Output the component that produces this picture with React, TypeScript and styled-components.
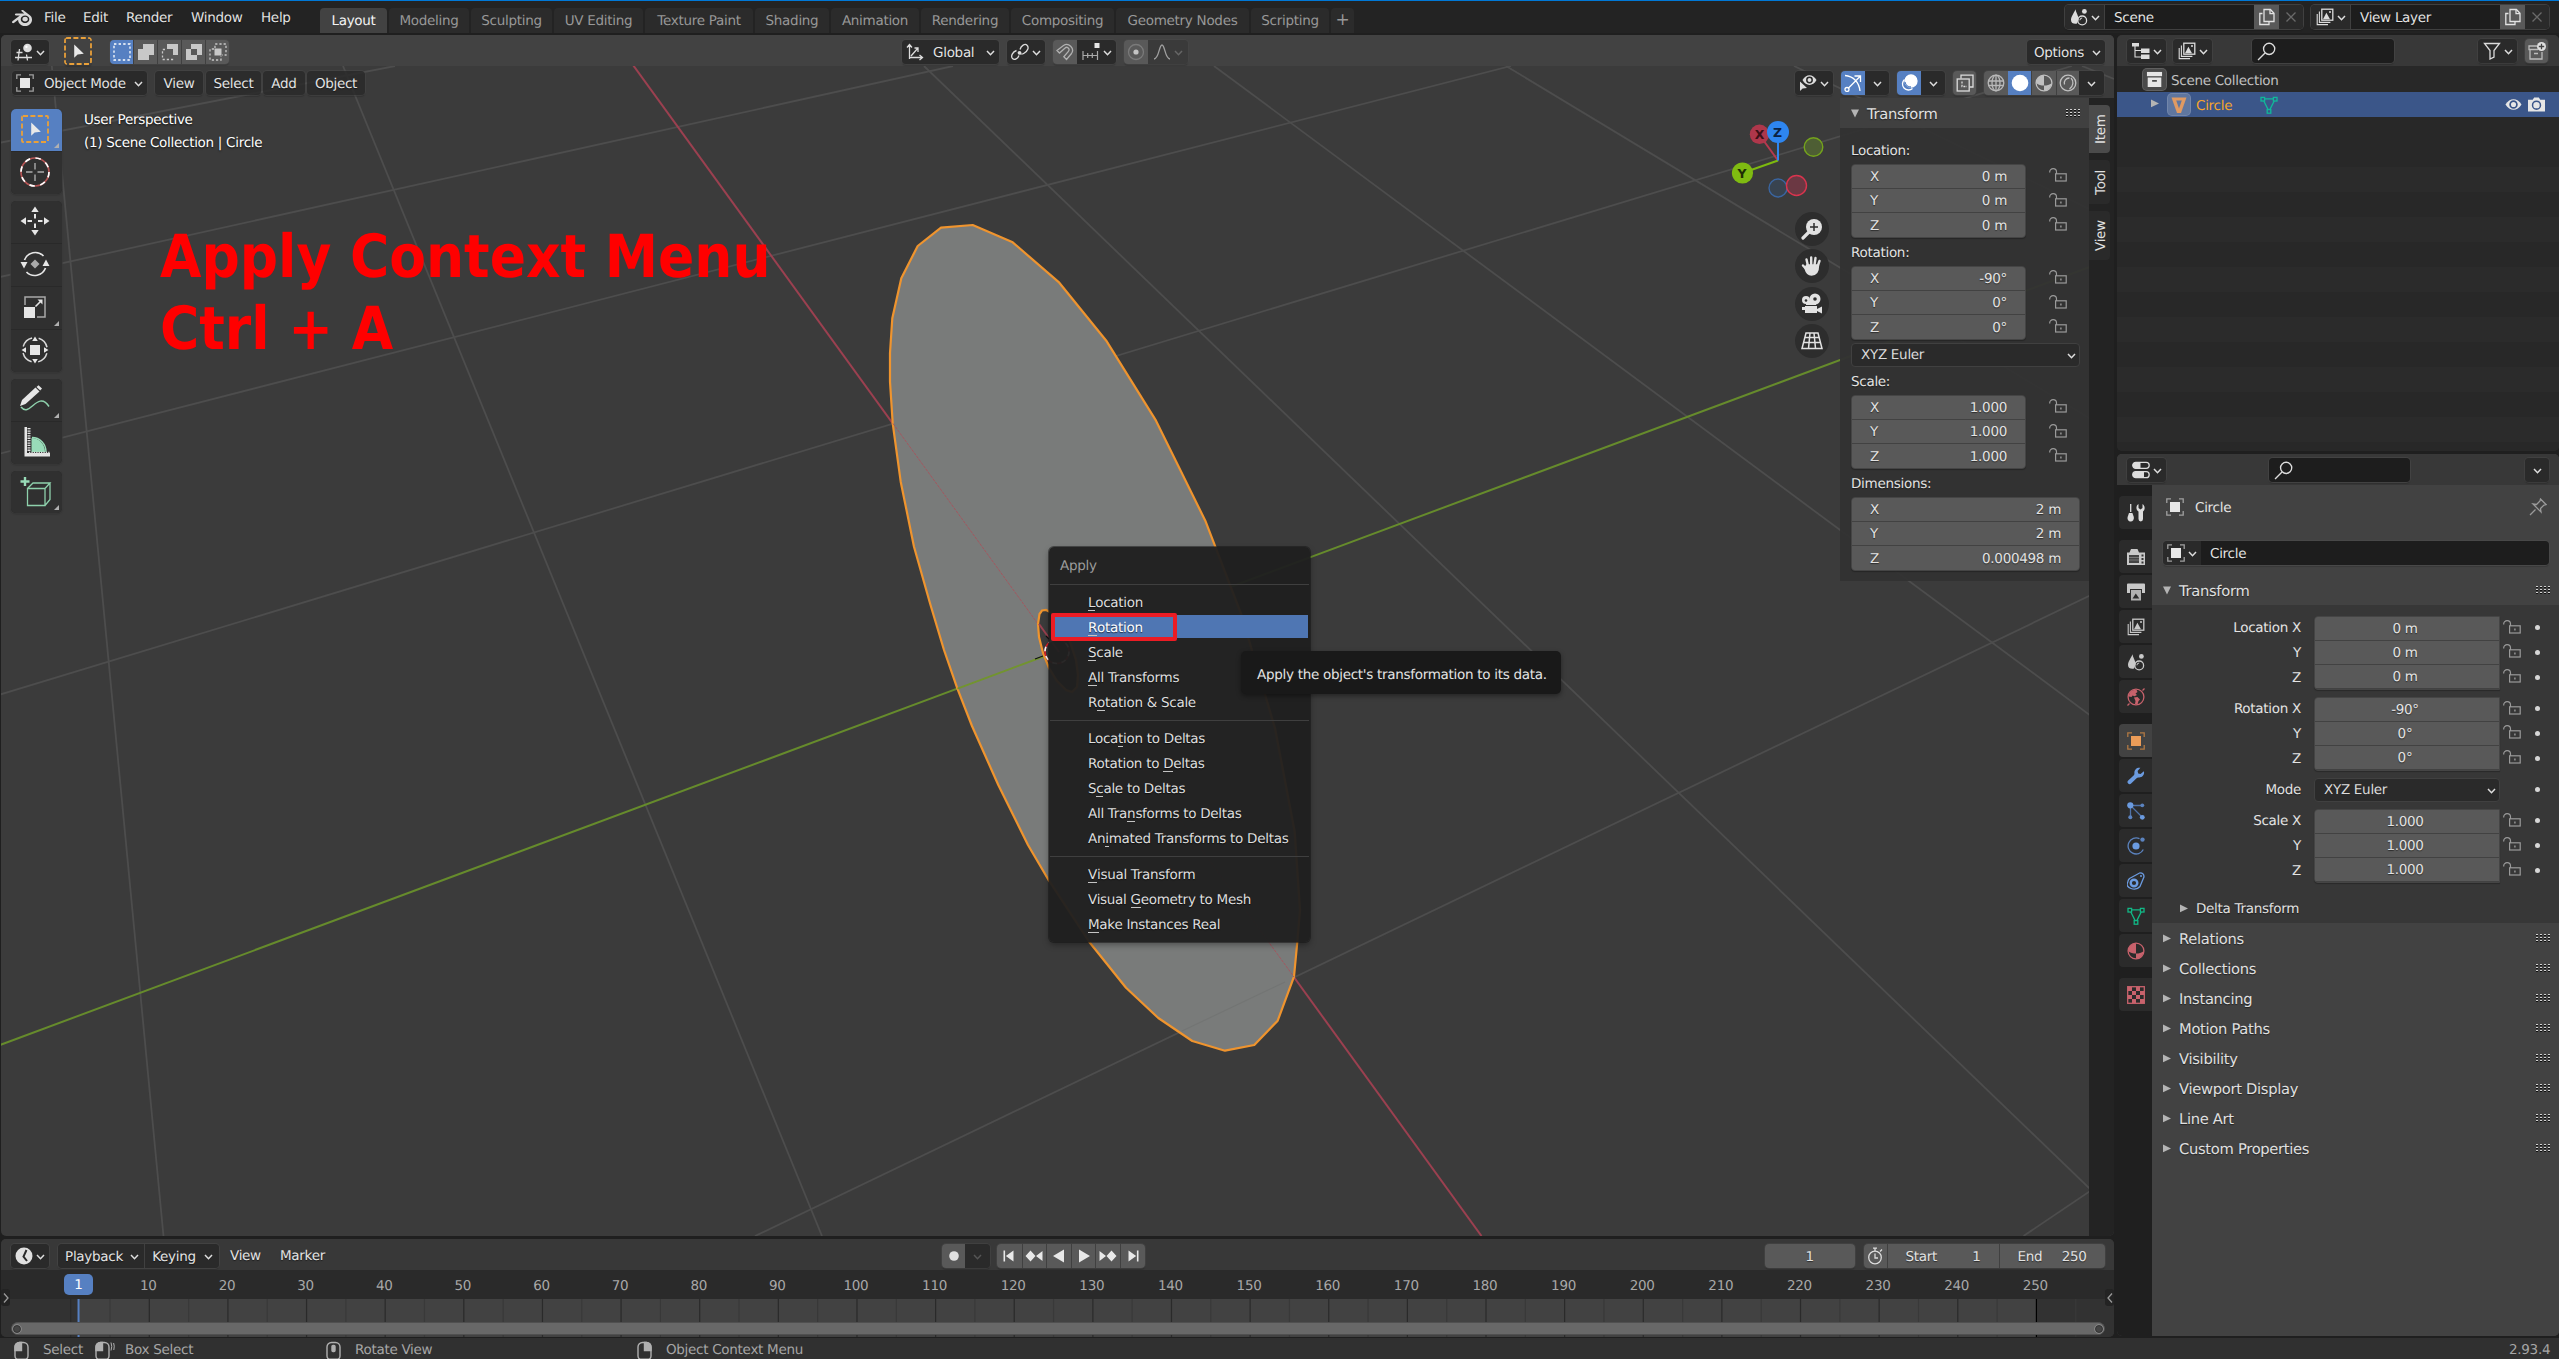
import React from "react";
import styled, { createGlobalStyle, css } from "styled-components";
import { SiBlender } from "react-icons/si";

const Global = createGlobalStyle`
  * { box-sizing: border-box; }
  html, body { margin: 0; padding: 0; background: #1f1f1f; overflow: hidden; }
  body {
    font-family: "DejaVu Sans", sans-serif;
    font-size: 13.5px;
    letter-spacing: -0.29px;
    line-height: 16px;
    color: #e3e3e3;
    text-rendering: geometricPrecision;
  }
  svg { display: block; flex: none; }
`;

/* ---------- shell ---------- */

const Window = styled.div`
  width: 2559px;
  height: 1359px;
  display: flex;
  flex-direction: column;
  background: #1f1f1f;
  overflow: hidden;
  white-space: nowrap;
`;

const TopBar = styled.header`
  height: 33px;
  border-top: 1px solid #0078d7;
  background: #232323;
  display: flex;
  align-items: flex-start;
  padding-left: 12px;
  flex: none;
`;

const Main = styled.main`
  height: 1301px;
  margin: 2px 0 2px 1px;
  display: flex;
  gap: 3px;
  flex: none;
`;

const LeftColumn = styled.div`
  width: 2113px;
  display: flex;
  flex-direction: column;
  gap: 3px;
`;

const RightColumn = styled.div`
  width: 442px;
  display: flex;
  flex-direction: column;
  gap: 3px;
`;

const Area = styled.section<{ h: number; bg: string }>`
  height: ${(p) => p.h}px;
  background: ${(p) => p.bg};
  border-radius: 5px;
  overflow: hidden;
  display: flex;
  flex-direction: column;
  flex: none;
  position: relative;
`;

/* ---------- shared controls ---------- */

const Logo = styled.div`
  width: 32px;
  padding-top: 7px;
  color: #d8d8d8;
`;

const MenuItem = styled.div<{ w: number; ml?: number }>`
  width: ${(p) => p.w}px;
  margin-left: ${(p) => p.ml ?? 0}px;
  padding-top: 9px;
  text-shadow: 0 1px 1px rgba(0, 0, 0, 0.5);
`;

const Tabs = styled.nav`
  display: flex;
  gap: 2px;
  padding: 7px 0 0 0;
`;

const Tab = styled.div<{ w: number; active?: boolean; plus?: boolean }>`
  width: ${(p) => p.w}px;
  height: 25px;
  border-radius: 4px 4px 0 0;
  background: ${(p) => (p.active ? "#424242" : "#2b2b2b")};
  color: ${(p) => (p.active ? "#f4f4f4" : "#989898")};
  text-align: center;
  line-height: 26px;
  ${(p) => p.plus && css`font-size: 17px; line-height: 25px;`}
`;

const Spacer = styled.div`
  flex: 1;
`;

const Header = styled.div<{ bg?: string; h?: number }>`
  height: ${(p) => p.h ?? 31}px;
  background: ${(p) => p.bg ?? "transparent"};
  display: flex;
  align-items: flex-start;
  flex: none;
`;

const Group = styled.div<{ ml?: number; mt?: number; h?: number; edge?: string }>`
  display: flex;
  height: ${(p) => p.h ?? 24}px;
  margin-left: ${(p) => p.ml ?? 0}px;
  margin-top: ${(p) => p.mt ?? 5}px;
  border-radius: 4px;
  overflow: hidden;
  box-shadow: 0 0 0 1px ${(p) => p.edge ?? "rgba(75,75,75,0.45)"}, 0 2px 1px rgba(0, 0, 0, 0.15);
  flex: none;
`;

const tones = {
  dark: "#2a2a2a",
  glass: "rgba(42,42,42,0.85)",
  mid: "#595959",
  blue: "#5680c2",
  field: "#1d1d1d",
  off: "#3a3a3a",
};

const Cell = styled.div<{ w: number; tone?: keyof typeof tones; divider?: boolean; align?: string; pad?: number }>`
  width: ${(p) => p.w}px;
  background: ${(p) => tones[p.tone ?? "dark"]};
  ${(p) => p.divider && css`border-left: 1px solid #404040;`}
  display: flex;
  align-items: center;
  justify-content: ${(p) => p.align ?? "center"};
  padding: 0 ${(p) => p.pad ?? 0}px;
  gap: 3px;
  color: #e3e3e3;
  text-shadow: 0 1px 1px rgba(0, 0, 0, 0.5);
  flex: none;
`;

const Caption = styled.span<{ ml?: number; mr?: number; grow?: boolean }>`
  padding-top: 1px;
  margin-left: ${(p) => p.ml ?? 0}px;
  margin-right: ${(p) => p.mr ?? 0}px;
  ${(p) => p.grow && css`flex: 1;`}
`;

type G = { children?: React.ReactNode; s?: number; c?: string };
const Ic = ({ children, s = 18, c = "#dcdcdc" }: G) => (
  <svg width={s} height={s} viewBox="0 0 18 18" fill="none" stroke={c} strokeWidth="1.3">
    {children}
  </svg>
);

const Chevron = ({ c = "#dedede" }: { c?: string }) => (
  <svg width="9" height="8" viewBox="0 -2 9 8" fill="none" stroke={c} strokeWidth="1.5">
    <path d="M1 1l3.5 3.7L8 1" />
  </svg>
);

const Lock = () => (
  <svg width="18" height="16" viewBox="0 0 18 16" fill="none" stroke="#9a9a9a" strokeWidth="1.2">
    <path d="M.7 4.6V4A3.4 3.3 0 0 1 7.5 4v2" />
    <rect x="6.6" y="5.8" width="10.6" height="7.2" />
    <path d="M11.9 8.4v2.2" strokeWidth="1.4" />
  </svg>
);

const Grip = () => (
  <svg width="15" height="12" viewBox="0 0 15 12">
    {[0, 4, 8, 12].map((x) =>
      [0, 3, 6].map((y) => (
        <g key={`${x}-${y}`}>
          <rect x={x} y={y} width="2" height="1" fill="#d0d0d0" />
          <rect x={x} y={y + 1} width="2" height="1" fill="#101010" />
        </g>
      ))
    )}
  </svg>
);

const Triangle = ({ open }: { open?: boolean }) => (
  <svg width="8" height="11" viewBox="0 0 8 11" fill="#b4b4b4">
    {open ? <path d="M0 .6h8L4 8.4z" /> : <path d="M0 .6v7.6l8-3.8z" />}
  </svg>
);

/* ---------- icons ---------- */

const SceneIcon = ({ c }: { c?: string }) => (
  <Ic c={c}>
    <path d="M5.4 1.2C6 4.5 8.6 8 8.6 11.2L7 15.6c-2.8.8-6-.4-6-3.6C1 8.2 4.2 5 5.4 1.2z" fill={c ?? "#dcdcdc"} stroke="none" />
    <circle cx="12.2" cy="12.4" r="4.4" />
    <path d="M12.2 10a2.3 2.3 0 0 0-2.3 2.3" strokeWidth="1" />
    <circle cx="14.4" cy="3.4" r="2.4" fill={c ?? "#dcdcdc"} stroke="none" />
  </Ic>
);

const LayersIcon = ({ c = "#dcdcdc" }: { c?: string }) => (
  <Ic c={c}>
    <path d="M1.2 6v10.6H12" strokeWidth="1.1" />
    <path d="M3.4 3.6v10.8h11" strokeWidth="1.1" />
    <rect x="5.8" y="1.2" width="11" height="11" />
    <path d="M7 11.2l3.4-6.4 3.6 6.4z" fill={c} stroke="none" />
    <circle cx="14" cy="4" r="1" fill={c} stroke="none" />
  </Ic>
);

const CopyIcon = () => (
  <Ic c="#e2e2e2">
    <path d="M4.5 5.5H1.8v11H11V14" />
    <path d="M6 1.5h6.4l3.6 3.8v8.2H6z" />
    <path d="M12 1.5v4.2h4" />
  </Ic>
);

const CloseIcon = () => (
  <Ic c="#6a6a6a">
    <path d="M4.5 4.5l9 9M13.5 4.5l-9 9" />
  </Ic>
);

const ViewEditorIcon = () => (
  <Ic>
    <path d="M4.5 6L3 17.5M11.5 11.5l1 6M1.5 9.5h6M0 14.5h17" />
    <circle cx="12.5" cy="5" r="4.3" fill="#dcdcdc" stroke="none" />
    <circle cx="11.4" cy="3.8" r="1.2" fill="#fff" stroke="none" />
  </Ic>
);

const ArrowBox = ({ s = 28 }: { s?: number }) => (
  <svg width={s} height={s} viewBox="0 0 28 28">
    <rect x="1" y="1" width="26" height="26" fill="none" stroke="#e9a03a" strokeWidth="1.8" strokeDasharray="5 2.4" rx="1" />
    <path d="M10.2 7.6v13.2l3.4-3.2 6.2-.8z" fill="#e8e8e8" />
  </svg>
);

const ObjectIcon = ({ c = "#e6e6e6", b = "#a0a0a0" }: { c?: string; b?: string }) => (
  <Ic c={b}>
    <path d="M.8 5V.8H5M13 .8h4.2V5M17.2 13v4.2H13M5 17.2H.8V13" />
    <rect x="4" y="4" width="10" height="10" fill={c} stroke="none" />
  </Ic>
);

const SearchIcon = () => (
  <Ic c="#dcdcdc" s={19}>
    <circle cx="11.5" cy="6.5" r="5.3" />
    <path d="M7.6 10.4L1 17" />
  </Ic>
);

const MeshIcon = ({ c = "#12b886" }: { c?: string }) => (
  <Ic c={c}>
    <rect x="1" y="1.4" width="3.6" height="3.6" />
    <rect x="13.4" y="1.4" width="3.6" height="3.6" />
    <rect x="7.2" y="13.6" width="3.6" height="3.6" />
    <path d="M4.6 2.8h8.8M3.8 5l4.2 8.4M14.2 5L10 13.4" />
  </Ic>
);

const MaterialIcon = ({ c = "#c8626c" }: { c?: string }) => (
  <Ic c={c}>
    <circle cx="9" cy="9" r="7.9" />
    <path d="M9 1.2A7.8 7.8 0 0 0 1.2 9c2 2 5 2.6 7.8 2.6zM9 11.6c2.8 0 5.6-.8 7.6-2.4A7.8 7.8 0 0 1 9 16.8z" fill={c} stroke="none" />
  </Ic>
);

const Wrench = ({ c = "#6b9be0" }: { c?: string }) => (
  <Ic c={c}>
    <path
      d="M16.8 4.2L13.6 7l-2.4-.4-.6-2.6L13.4.8C10 0 7 2.6 7.4 6.4c.1.9-.2 1.4-.8 2L1.2 13.6a2 2 0 0 0 2.9 3l5.5-5.4c.6-.6 1.2-.8 2-.7 3.6.4 6.4-2.8 5.2-6.3z"
      fill={c}
      stroke="none"
    />
  </Ic>
);

/* ---------- viewport ---------- */

const ViewBody = styled.div`
  position: relative;
  height: 1170px;
  display: flex;
  flex-direction: column;
`;

const SceneCanvas = styled.svg`
  position: absolute;
  left: 0;
  top: 0;
`;

const Overlay = styled.div`
  position: relative;
  display: flex;
  flex-direction: column;
  height: 100%;
`;

const OverlayRow = styled.div`
  flex: 1;
  display: flex;
  min-height: 0;
`;

const ToolColumn = styled.div`
  width: 51px;
  margin-left: 10px;
  padding-top: 11px;
  display: flex;
  flex-direction: column;
  gap: 7px;
`;

const ToolGroup = styled.div`
  display: flex;
  flex-direction: column;
  gap: 1px;
  border-radius: 5px;
  overflow: hidden;
  background: #292929;
  box-shadow: 0 0 0 1px rgba(60, 60, 60, 0.6), 0 1px 2px rgba(0, 0, 0, 0.3);
`;

const Tool = styled.div<{ active?: boolean; more?: boolean }>`
  height: 42px;
  background: ${(p) => (p.active ? "#5680c2" : "#303030")};
  display: flex;
  align-items: center;
  justify-content: center;
  padding: 0 4px 2px 0;
  position: relative;
  ${(p) =>
    p.more &&
    css`
      &::after {
        content: "";
        position: absolute;
        right: 3px;
        bottom: 3px;
        border-left: 5px solid transparent;
        border-bottom: 5px solid #b0b0b0;
      }
    `}
`;

const ViewInfo = styled.div`
  margin: 10.5px 0 0 22px;
  display: flex;
  flex-direction: column;
  line-height: 23px;
  color: #fff;
  text-shadow: 0 1px 2px rgba(0, 0, 0, 0.8);
`;

const NavColumn = styled.div`
  width: 115px;
  display: flex;
  flex-direction: column;
  align-items: flex-start;
`;

const NavButtons = styled.div`
  margin-left: 70px;
  display: flex;
  flex-direction: column;
  gap: 3.4px;
`;

const NavButton = styled.div`
  width: 34px;
  height: 34px;
  border-radius: 50%;
  background: #2d2d2d;
  display: flex;
  align-items: center;
  justify-content: center;
`;

const SidePanel = styled.aside`
  width: 249px;
  height: 483px;
  background: rgba(50, 50, 50, 0.96);
  display: flex;
  flex-direction: column;
`;

const PanelHead = styled.div<{ h?: number; bg?: string; pl?: number; small?: boolean }>`
  height: ${(p) => p.h ?? 30}px;
  background: ${(p) => p.bg ?? "transparent"};
  display: flex;
  align-items: center;
  gap: 8px;
  padding: 3px 8px 0 ${(p) => p.pl ?? 11}px;
  font-size: ${(p) => (p.small ? 13.5 : 14.7)}px;
  color: #e0e0e0;
  text-shadow: 0 1px 1px rgba(0, 0, 0, 0.5);
  flex: none;
`;

const PanelBody = styled.div`
  padding: 10px 9px 0 11px;
`;

const FieldLabel = styled.div<{ h?: number }>`
  height: ${(p) => p.h ?? 28}px;
  line-height: ${(p) => (p.h ?? 28) + 2}px;
  text-shadow: 0 1px 1px rgba(0, 0, 0, 0.5);
`;

const FieldRow = styled.div<{ mb?: number }>`
  display: flex;
  height: 74px;
  margin-bottom: ${(p) => p.mb ?? 0}px;
`;

const FieldStack = styled.div<{ w: number; flatRight?: boolean }>`
  width: ${(p) => p.w}px;
  display: flex;
  flex-direction: column;
  gap: 1px;
  background: #424242;
  border: 1px solid #454545;
  border-radius: ${(p) => (p.flatRight ? "4px 0 0 4px" : "4px")};
  overflow: hidden;
  box-shadow: 0 1px 1px rgba(0, 0, 0, 0.25);
`;

const Field = styled.div<{ centered?: boolean }>`
  flex: 1;
  background: #595959;
  display: flex;
  align-items: center;
  justify-content: ${(p) => (p.centered ? "center" : "space-between")};
  padding: 1px 18px 0 18px;
  ${(p) => p.centered && css`padding: 1px 4px 0 0;`}
  text-shadow: 0 1px 1px rgba(0, 0, 0, 0.5);
`;

const ThirdColumn = styled.div<{ w: number; ml?: number; align?: string }>`
  width: ${(p) => p.w}px;
  margin-left: ${(p) => p.ml ?? 0}px;
  display: grid;
  grid-template-rows: repeat(3, 1fr);
  align-items: center;
  justify-items: ${(p) => p.align ?? "start"};
`;

const Dropdown = styled.div<{ w: number }>`
  width: ${(p) => p.w}px;
  height: 24px;
  background: #2a2a2a;
  border: 1px solid #404040;
  border-radius: 4px;
  display: flex;
  align-items: center;
  justify-content: space-between;
  padding: 1px 3px 0 9px;
  color: #dcdcdc;
`;

const TabStrip = styled.div`
  width: 25px;
  background: #232323;
  padding-top: 7px;
  display: flex;
  flex-direction: column;
  gap: 7px;
`;

const SideTab = styled.div<{ h: number; active?: boolean }>`
  width: 21px;
  height: ${(p) => p.h}px;
  background: ${(p) => (p.active ? "#4b4b4b" : "#2a2a2a")};
  writing-mode: vertical-rl;
  transform: rotate(180deg);
  border-radius: 4px 0 0 4px;
  display: flex;
  align-items: center;
  justify-content: center;
  padding-right: 2px;
  color: #e0e0e0;
`;

const gridA = [
  [0, 142.7, 395, 66], [0, 277, 953, 66], [0, 453.7, 1511, 66], [0, 694.5, 2072, 66],
  [755, 1236, 2114, 584], [2023.5, 1236, 2114, 1175],
];
const gridB = [
  [51.8, 66, 163.5, 1236], [343, 66, 822, 1236], [924, 66, 2114, 1212],
  [1214, 66, 2114, 733], [1506, 66, 2114, 433], [1794, 66, 2114, 221], [2082, 66, 2114, 79],
];

const disc =
  "972.7,225 1012.7,242.3 1059.3,282.7 1106.7,341.3 1156,420.7 1205.3,520.7 1241.3,614.3 1275,728.3 1294.7,831.7 1300,910 1297.3,942 1294,976.7 1277.7,1020.7 1254.3,1045 1225,1050.7 1192.3,1041 1158.3,1018 1126,987.7 1089.3,942 1049,880.7 1028,845 998.3,785 972,726 957.3,688.3 944,650 930,603.3 914,546.7 900.7,481.7 892.7,423.3 890,381.7 890,353 892.3,318.3 901.3,278.3 917.7,246 941,227.7";
const hole =
  "1042,610.5 1046,610 1052,613 1062,626 1070,642 1076,660 1078,675 1077,687 1072,692 1066,690 1057,681 1049,668 1043,653 1039,637 1038,624 1039.5,614";

const Scene = () => (
  <SceneCanvas width="2113" height="1170" viewBox="1 66 2113 1170" fill="none">
    {[...gridA, ...gridB].map((l, i) => (
      <line key={i} x1={l[0]} y1={l[1]} x2={l[2]} y2={l[3]} stroke="#4d4d4d" strokeWidth="1.8" />
    ))}
    <line x1="633" y1="65" x2="1481.5" y2="1236" stroke="#9b4050" strokeWidth="2" />
    <line x1="0" y1="1045" x2="2114" y2="258" stroke="#668b2c" strokeWidth="2" />
    <polygon points={disc} fill="#797b7a" stroke="#ef942e" strokeWidth="2.2" strokeLinejoin="round" />
    <line x1="1182" y1="1031" x2="1285" y2="982" stroke="#737574" strokeWidth="1.2" />
    <line x1="893" y1="423.5" x2="1038" y2="624" stroke="#a3575f" strokeWidth="1" strokeDasharray="3 1" />
    <line x1="1049" y1="639" x2="1294" y2="977" stroke="#a3575f" strokeWidth="1" strokeDasharray="3 1" />
    <line x1="957.5" y1="688.6" x2="1057" y2="651.5" stroke="#72942f" strokeWidth="2" />
    <polygon points={hole} fill="#3b3b3b" stroke="#ef942e" strokeWidth="2.2" />
    <path d="M1039 624l20 28" stroke="#9b4050" strokeWidth="2" />
    <circle cx="1057" cy="651.5" r="12" stroke="#e0202a" strokeWidth="1.6" />
    <circle cx="1057" cy="651.5" r="12" stroke="#fff" strokeWidth="1.6" strokeDasharray="4.7 4.7" />
    <path d="M1035 659l8-3M1046 636l3 3" stroke="#101010" strokeWidth="1.2" />
  </SceneCanvas>
);

const NavGizmo = () => (
  <svg width="115" height="114" viewBox="1725 98 115 114" fill="none" fontFamily="DejaVu Sans, sans-serif" fontSize="12.5" fontWeight="bold" textAnchor="middle">
    <path d="M1778 160.5L1761 137" stroke="#b6394f" strokeWidth="2" />
    <path d="M1778 160.5L1744 172.5" stroke="#7db90f" strokeWidth="2" />
    <circle cx="1778" cy="188" r="9" fill="#38434f" stroke="#3a65a0" strokeWidth="1.4" />
    <circle cx="1796.5" cy="185.5" r="10" fill="#6b3843" stroke="#d9344e" strokeWidth="1.4" />
    <circle cx="1813.5" cy="147" r="9.3" fill="#4e5e34" stroke="#74a31c" strokeWidth="1.4" />
    <circle cx="1759.5" cy="134.3" r="9.7" fill="#ae374b" />
    <circle cx="1742.5" cy="173" r="10.6" fill="#7fbb11" />
    <path d="M1778 160.5V140" stroke="#2e86ee" strokeWidth="2" />
    <circle cx="1778" cy="132" r="11" fill="#2e86f0" />
    <text x="1759.5" y="139" fill="#3c1018">X</text>
    <text x="1742" y="177.5" fill="#1e2e04">Y</text>
    <text x="1777.5" y="136.5" fill="#0b2243">Z</text>
  </svg>
);

/* ---------- apply menu ---------- */

const Annotation = styled.div`
  position: absolute;
  left: 159px;
  top: 156px;
  font-family: "DejaVu Sans Condensed", "DejaVu Sans", sans-serif;
  font-stretch: condensed;
  font-weight: bold;
  font-size: 59.5px;
  letter-spacing: 0;
  line-height: 72px;
  color: #ff0000;
`;

const PopupMenu = styled.div`
  position: absolute;
  left: 1048px;
  top: 481px;
  width: 261px;
  height: 395px;
  background: rgba(31, 31, 31, 0.955);
  border-radius: 5px;
  box-shadow: 0 0 0 1px rgba(20, 20, 20, 0.5), 0 3px 6px rgba(0, 0, 0, 0.35);
  padding: 7px 2px 0 2px;
`;

const MenuTitle = styled.div`
  height: 24px;
  line-height: 25px;
  padding-left: 9px;
  color: #9c9c9c;
`;

const Separator = styled.div`
  height: 1px;
  margin: 6px -1px 4px;
  background: #3f3f3f;
`;

const MenuEntry = styled.div<{ active?: boolean }>`
  position: relative;
  height: 25px;
  display: flex;
  align-items: center;
  padding: 3px 0 0 37px;
  color: ${(p) => (p.active ? "#fff" : "#dedede")};
  text-shadow: 0 1px 1px rgba(0, 0, 0, 0.6);
  ${(p) =>
    p.active &&
    css`
      background: linear-gradient(#4f76b3, #4f76b3) center / 100% 23px no-repeat;
    `}
`;

const Key = styled.span`
  border-bottom: 1px solid #c4c4c4;
  line-height: 14px;
  display: inline-block;
`;

const Highlight = styled.div`
  position: absolute;
  left: 0;
  top: -1px;
  width: 126px;
  height: 27.5px;
  border: 4px solid #ec1c24;
  border-radius: 2px;
`;

const Tooltip = styled.div`
  position: absolute;
  left: 1240px;
  top: 585px;
  width: 320px;
  height: 43px;
  border-radius: 5px;
  background: #191919;
  box-shadow: 0 2px 5px rgba(0, 0, 0, 0.4);
  display: flex;
  align-items: center;
  padding: 5px 0 0 16px;
`;

const Entry = ({ text, k, active }: { text: string; k: number; active?: boolean }) => (
  <MenuEntry active={active}>
    <span>
      {text.slice(0, k)}
      <Key>{text[k]}</Key>
      {text.slice(k + 1)}
    </span>
    {active && <Highlight />}
  </MenuEntry>
);

/* ---------- timeline ---------- */

const Ruler = styled.div`
  height: 29px;
  background: #2a2a2a;
  display: flex;
  padding: 2px 0 0 108px;
  align-items: center;
  color: #a8a8a8;
  flex: none;
`;

const RulerMark = styled.div`
  width: 78.63px;
  text-align: center;
  flex: none;
`;

const Track = styled.div`
  position: relative;
  height: 38px;
  background: #323232;
`;

const TrackLines = styled.svg`
  position: absolute;
  left: 0;
  top: 0;
`;

const ScrollBar = styled.div`
  position: absolute;
  left: 10px;
  top: 23px;
  width: 2094px;
  height: 13px;
  border-radius: 7px;
  background: #686868;
  border: 1px solid #505050;
  display: flex;
  justify-content: space-between;
  align-items: center;
  padding: 0 1px;
`;

const Knob = styled.div`
  width: 8px;
  height: 8px;
  border-radius: 50%;
  background: #454545;
  border: 1px solid #333;
  outline: 1px solid #858585;
`;

const Playhead = styled.div`
  position: absolute;
  left: 63px;
  top: 35px;
  width: 29px;
  height: 21px;
  border-radius: 5px;
  background: #5680c2;
  color: #fff;
  text-align: center;
  line-height: 22px;
`;

const EdgeHandle = styled.div<{ right?: boolean }>`
  position: absolute;
  top: 50px;
  ${(p) => (p.right ? "right: 0;" : "left: 0;")}
  width: 9px;
  height: 17px;
  background: #232323;
  border-radius: 3px;
  display: flex;
  align-items: center;
  justify-content: center;
`;

const fx = (f: number) => 149.3 + 7.863 * (f - 10) - 1;

/* ---------- outliner ---------- */

const Tree = styled.div`
  flex: 1;
  display: flex;
  flex-direction: column;
  background: repeating-linear-gradient(#2b2b2b 0 25px, #282828 25px 50px);
  background-position: 0 1px;
`;

const TreeRow = styled.div<{ h: number; selected?: boolean; pl: number; pt?: number }>`
  height: ${(p) => p.h}px;
  background: ${(p) => (p.selected ? "#3b5689" : "#282828")};
  display: flex;
  align-items: center;
  padding: ${(p) => p.pt ?? 0}px 14px 0 ${(p) => p.pl}px;
`;

const IconPlate = styled.div<{ bg: string; w?: number; mr?: number; ml?: number }>`
  width: ${(p) => p.w ?? 24}px;
  height: 23px;
  border-radius: 5px;
  background: ${(p) => p.bg};
  border: 1px solid rgba(255, 255, 255, 0.12);
  display: flex;
  align-items: center;
  justify-content: center;
  margin-right: ${(p) => p.mr ?? 5}px;
  margin-left: ${(p) => p.ml ?? 0}px;
`;

const TreeName = styled.span<{ c: string; w?: number }>`
  color: ${(p) => p.c};
  padding-top: 3px;
  ${(p) => p.w && css`width: ${p.w}px;`}
`;

const RowTools = styled.div`
  display: flex;
  gap: 6px;
  margin-left: auto;
`;

/* ---------- properties ---------- */

const PropBody = styled.div`
  flex: 1;
  display: flex;
`;

const PropTabs = styled.div`
  width: 35px;
  background: #1f1f1f;
  padding: 11px 0 0 2px;
  display: flex;
  flex-direction: column;
  gap: 2px;
`;

const PropTab = styled.div<{ active?: boolean; gapTop?: boolean }>`
  height: 33px;
  margin-top: ${(p) => (p.gapTop ? 9 : 0)}px;
  background: ${(p) => (p.active ? "#424242" : "#2b2b2b")};
  border-radius: 4px 0 0 4px;
  display: flex;
  align-items: center;
  justify-content: center;
`;

const PropContent = styled.div`
  width: 407px;
  background: #424242;
  display: flex;
  flex-direction: column;
`;

const Crumb = styled.div`
  height: 44px;
  display: flex;
  align-items: center;
  gap: 11px;
  padding: 0 12px 0 14px;
`;

const IdBlock = styled.div`
  display: flex;
  padding: 12px 0 10px 11px;
`;

const TransformBody = styled.div`
  height: 318px;
  background: #373737;
  padding-top: 10.5px;
  flex: none;
`;

const RowLabel = styled.div`
  width: 149px;
  text-align: right;
  padding-top: 1px;
  text-shadow: 0 1px 1px rgba(0, 0, 0, 0.5);
`;

const ModeRow = styled.div`
  display: flex;
  align-items: center;
  height: 24px;
  margin-bottom: 7px;
  gap: 13px;
`;

const Dot = styled.i<{ ml?: number }>`
  width: 5px;
  height: 5px;
  border-radius: 50%;
  background: #d6d6d6;
  margin-left: ${(p) => p.ml ?? 0}px;
`;

const StatusBar = styled.footer`
  height: 21px;
  background: #303030;
  display: flex;
  align-items: center;
  padding-left: 14px;
  color: #a6a6a6;
  flex: none;
`;

const StatusItem = styled.div<{ w: number; gap?: number }>`
  width: ${(p) => p.w}px;
  display: flex;
  align-items: center;
  gap: ${(p) => p.gap ?? 14}px;
  padding-top: 3px;
`;

const Mouse = ({ b }: { b: "l" | "m" | "r" | "d" }) => (
  <svg width={b === "d" ? 20 : 15} height="19" viewBox={b === "d" ? "0 0 20 19" : "0 0 15 19"} fill="none" stroke="#b0b0b0" strokeWidth="1.4">
    <path d="M1 15V6a4.5 4.5 0 0 1 4.5-4.5h4A4.5 4.5 0 0 1 14 6v9a3.5 3.5 0 0 1-3.5 3.3h-6A3.5 3.5 0 0 1 1 15z" />
    {(b === "l" || b === "d") && <path d="M1 9.5V6a4.5 4.5 0 0 1 4.5-4.5h2v8z" fill="#b0b0b0" />}
    {b === "r" && <path d="M14 9.5V6a4.5 4.5 0 0 0-4.5-4.5h-2v8z" fill="#b0b0b0" />}
    {b === "m" && <rect x="6" y="4.5" width="3" height="6" rx="1" fill="#b0b0b0" />}
    {b === "d" && <path d="M16 1.5q1.5 4 0 8M18.6 2q1.2 3 .2 7" strokeWidth="1" />}
  </svg>
);

const AxisBlock = ({ label, values }: { label: string; values: string[] }) => (
  <FieldRow mb={7}>
    <ThirdColumn w={149} align="end">
      <Caption>{label} X</Caption>
      <Caption>Y</Caption>
      <Caption>Z</Caption>
    </ThirdColumn>
    <ThirdColumn w={13} />
    <FieldStack w={186} flatRight>
      {values.map((v, i) => (
        <Field key={i} centered>{v}</Field>
      ))}
    </FieldStack>
    <ThirdColumn w={18} ml={3}><Lock /><Lock /><Lock /></ThirdColumn>
    <ThirdColumn w={5} ml={14}><Dot /><Dot /><Dot /></ThirdColumn>
  </FieldRow>
);

const AxisFields = ({ w, values, lock, mb }: { w: number; values: string[]; lock?: boolean; mb?: number }) => (
  <FieldRow mb={mb}>
    <FieldStack w={w}>
      {["X", "Y", "Z"].map((a, i) => (
        <Field key={a}>
          <span>{a}</span>
          <span>{values[i]}</span>
        </Field>
      ))}
    </FieldStack>
    {lock && <ThirdColumn w={18} ml={23}><Lock /><Lock /><Lock /></ThirdColumn>}
  </FieldRow>
);

const tabs: [string, number][] = [
  ["Layout", 67], ["Modeling", 80], ["Sculpting", 81], ["UV Editing", 89], ["Texture Paint", 108], ["Shading", 74],
  ["Animation", 88], ["Rendering", 88], ["Compositing", 103], ["Geometry Nodes", 133], ["Scripting", 78], ["+", 23],
];

export default function App() {
  return (
    <Window>
      <Global />
      <TopBar>
        <Logo><SiBlender size={20} /></Logo>
        <MenuItem w={39}>File</MenuItem>
        <MenuItem w={43}>Edit</MenuItem>
        <MenuItem w={65}>Render</MenuItem>
        <MenuItem w={70}>Window</MenuItem>
        <MenuItem w={59}>Help</MenuItem>
        <Tabs>
          {tabs.map(([t, w], i) => (
            <Tab key={t} w={w} active={i === 0} plus={t === "+"}>{t}</Tab>
          ))}
        </Tabs>
        <Group ml={711} mt={4} edge="#404040">
          <Cell w={39}><SceneIcon /><Chevron /></Cell>
          <Cell w={150} tone="field" align="flex-start" pad={9} divider><Caption>Scene</Caption></Cell>
          <Cell w={25} tone="mid"><CopyIcon /></Cell>
          <Cell w={24}><CloseIcon /></Cell>
        </Group>
        <Group ml={8} mt={4} edge="#404040">
          <Cell w={39}><LayersIcon /><Chevron /></Cell>
          <Cell w={150} tone="field" align="flex-start" pad={9} divider><Caption>View Layer</Caption></Cell>
          <Cell w={25} tone="mid"><CopyIcon /></Cell>
          <Cell w={24}><CloseIcon /></Cell>
        </Group>
      </TopBar>

      <Main>
        <LeftColumn>
          <Area h={1201} bg="#3b3b3b">
            <Header bg="#424242">
              <Group ml={10}><Cell w={38}><ViewEditorIcon /><Chevron /></Cell></Group>
              <Group ml={15} mt={2} h={28} edge="transparent"><ArrowBox /></Group>
              <Group ml={18}>
                <Cell w={23} tone="blue">
                  <Ic c="#fff"><rect x="1" y="1" width="16" height="16" strokeDasharray="2.4 2.2" /></Ic>
                </Cell>
                <Cell w={24} tone="mid" divider>
                  <Ic><path d="M6 1h11v11h-5v5H1V6h5z" fill="#c8c8c8" stroke="none" /></Ic>
                </Cell>
                <Cell w={24} tone="mid" divider>
                  <Ic c="#c8c8c8"><path d="M6 1h11v11h-5V6H6z" fill="#c8c8c8" stroke="none" /><path d="M4 6.5H1.5v10h10V14" strokeDasharray="2.2 2" /></Ic>
                </Cell>
                <Cell w={24} tone="mid" divider>
                  <Ic><path d="M6 1h11v11h-5v5H1V6h5zM6 6v6h6V6z" fill="#c8c8c8" fillRule="evenodd" stroke="none" /></Ic>
                </Cell>
                <Cell w={24} tone="mid" divider>
                  <Ic c="#c8c8c8"><path d="M6 5V1h11v11h-4M5 6H1v11h11v-4" strokeDasharray="2.2 2" /><rect x="5.5" y="5.5" width="7" height="7" fill="#c8c8c8" stroke="none" /></Ic>
                </Cell>
              </Group>
              <Group ml={673}>
                <Cell w={97} align="flex-start" pad={4}>
                  <Ic><path d="M3.5 16V2M1 4.5L3.5 1.5 6 4.5M3.5 14.5H16M13.5 12l3 2.5-3 2.5M5 13l7-8M8.5 5H12v4" /></Ic>
                  <Caption ml={6} grow>Global</Caption>
                  <Chevron />
                </Cell>
              </Group>
              <Group ml={8}>
                <Cell w={38}>
                  <Ic><circle cx="8.5" cy="9.8" r="1.9" fill="#dcdcdc" stroke="none" /><path d="M8 12.5c-1 3-4.5 5-6.5 3s0-7 4-8M9 6.5c1-4 5-6.3 7-4.3s1.3 5.3-3 8c-2 1.2-4 .8-4.5 0" /></Ic>
                  <Chevron />
                </Cell>
              </Group>
              <Group ml={8}>
                <Cell w={24} tone="mid">
                  <Ic c="#b0b0b0"><path d="M1 7.5L7.5 2.5c5-3.5 11.5 3 8 8L10.5 16.5l-2.700-2.700 4.600-5.500c2-2.500-1.300-5.200-3.300-3.400L3.500 10z" /></Ic>
                </Cell>
                <Cell w={39}>
                  <Ic><path d="M1 8v9M5.7 10v5M10.3 10v5M15.5 8v9M1 12.5h14.5" strokeWidth="1.2" stroke="#aaa" /><rect x="12.5" y="0" width="5" height="5" fill="#e6e6e6" stroke="none" /></Ic>
                  <Chevron />
                </Cell>
              </Group>
              <Group ml={8}>
                <Cell w={24} tone="mid">
                  <Ic c="#7a7a7a"><circle cx="9" cy="9" r="7.5" /><circle cx="9" cy="9" r="2.6" fill="#c4c4c4" stroke="none" /></Ic>
                </Cell>
                <Cell w={40} tone="off">
                  <Ic c="#a0a0a0"><path d="M1 16c5 0 5-14 8-14s3 14 8 14" /></Ic>
                  <Chevron c="#666" />
                </Cell>
              </Group>
              <Group ml={839}><Cell w={78}><Caption ml={3} mr={5}>Options</Caption><Chevron /></Cell></Group>
            </Header>

            <ViewBody>
              <Scene />
              <Overlay>
                <Header h={32}>
                  <Group ml={11} edge="#404040">
                    <Cell w={135} align="flex-start" pad={4}>
                      <ObjectIcon />
                      <Caption ml={7} grow>Object Mode</Caption>
                      <Chevron />
                    </Cell>
                  </Group>
                  <Group ml={8}><Cell w={48} tone="glass"><Caption>View</Caption></Cell></Group>
                  <Group ml={3}><Cell w={55} tone="glass"><Caption>Select</Caption></Cell></Group>
                  <Group ml={2}><Cell w={42} tone="glass"><Caption>Add</Caption></Cell></Group>
                  <Group ml={2}><Cell w={58} tone="glass"><Caption>Object</Caption></Cell></Group>
                  <Group ml={1430}>
                    <Cell w={38}>
                      <Ic><path d="M1 7.5v9.5l2.6-2.4 4.4-.6z" fill="#dcdcdc" stroke="none" /><path d="M3.5 6C7-.5 14-.5 17.5 6 14 12.500 7 12.500 3.500 6z" fill="#dcdcdc" stroke="none" /><circle cx="10.5" cy="6" r="2.7" stroke="#2a2a2a" strokeWidth="1.5" /></Ic>
                      <Chevron />
                    </Cell>
                  </Group>
                  <Group ml={8}>
                    <Cell w={24} tone="blue"><Ic c="#fff"><path d="M1 1.5c8 .5 14 6.5 15 15.500M3 15.500L16 2.500M10.500 2H16.500V8" /><circle cx="3" cy="15.5" r="2" fill="#5680c2" /></Ic></Cell>
                    <Cell w={24}><Chevron /></Cell>
                  </Group>
                  <Group ml={8}>
                    <Cell w={24} tone="blue"><Ic c="#fff"><circle cx="11" cy="7" r="6" fill="#fff" /><path d="M4.5 5.5a6 6 0 1 0 8 9" /><path d="M5 8a6 6 0 0 0 6 5" stroke="#5680c2" /></Ic></Cell>
                    <Cell w={24}><Chevron /></Cell>
                  </Group>
                  <Group ml={8}>
                    <Cell w={23} tone="mid"><Ic><path d="M5 4.5V1.2h12V13h-3.5" /><rect x="1.2" y="5" width="12" height="12" /><path d="M6 7.5v5h5" strokeDasharray="2 1.2" /></Ic></Cell>
                  </Group>
                  <Group ml={8}>
                    <Cell w={24} tone="mid"><Ic c="#b8b8b8"><circle cx="9" cy="9" r="7.8" /><path d="M9 1v16M1.5 7h15M1.5 11.5h15" /><ellipse cx="9" cy="9" rx="4" ry="7.8" /></Ic></Cell>
                    <Cell w={23} tone="blue"><Ic><circle cx="9" cy="9" r="8.3" fill="#fff" stroke="none" /></Ic></Cell>
                    <Cell w={25} tone="mid" divider><MaterialIcon c="#c0c0c0" /></Cell>
                    <Cell w={23} tone="mid" divider><Ic c="#c0c0c0"><circle cx="9" cy="9" r="7.8" /><path d="M5.5 10.5a5 5 0 0 1 5-6.5M12 4c3 3 2.5 8-1.5 11" /></Ic></Cell>
                    <Cell w={25}><Chevron /></Cell>
                  </Group>
                </Header>
                <OverlayRow>
                  <ToolColumn>
                    <ToolGroup>
                      <Tool active more><ArrowBox /></Tool>
                      <Tool>
                        <svg width="30" height="30" viewBox="0 0 30 30" fill="none">
                          <circle cx="15" cy="15" r="14" stroke="#b55555" strokeWidth="1.7" />
                          <circle cx="15" cy="15" r="14" stroke="#fff" strokeWidth="1.7" strokeDasharray="5.5 5.5" />
                          <path d="M15 6v6.5M15 17.5V24M6 15h6.5M17.5 15H24" stroke="#aaa" strokeWidth="1.4" />
                        </svg>
                      </Tool>
                    </ToolGroup>
                    <ToolGroup>
                      <Tool>
                        <svg width="30" height="30" viewBox="0 0 30 30" fill="#e6e6e6">
                          <path d="M15 .5l3.7 5.5h-7.4zM15 29.5l3.7-5.5h-7.4zM.5 15L6 11.3v7.4zM29.5 15L24 11.3v7.4zM14 8h2v4.5h-2zM14 17.5h2V22h-2zM7.5 14H12v2H7.5zM18 14h4.5v2H18z" />
                        </svg>
                      </Tool>
                      <Tool>
                        <svg width="30" height="30" viewBox="0 0 30 30" fill="none" stroke="#e6e6e6" strokeWidth="1.7">
                          <path d="M4.5 11A11.5 11.5 0 0 1 23.5 7M25.5 19A11.5 11.5 0 0 1 6.5 23" />
                          <path d="M.5 13h7l-3.5 6.5zM29.5 17h-7L26 10.5z" fill="#e6e6e6" stroke="none" />
                          <path d="M15 10.5l4.5 4.5-4.5 4.5-4.5-4.5z" fill="#aaa" stroke="none" />
                        </svg>
                      </Tool>
                      <Tool more>
                        <svg width="30" height="30" viewBox="0 0 30 30" fill="none">
                          <path d="M5 13V5h20v20h-8" stroke="#a8a8a8" strokeWidth="1.5" />
                          <rect x="4" y="15" width="11" height="11" fill="#e6e6e6" />
                          <path d="M15.5 14.5L21 9" stroke="#e6e6e6" strokeWidth="1.6" /><path d="M17.5 7.5H22.5V12.5z" fill="#e6e6e6" />
                        </svg>
                      </Tool>
                      <Tool>
                        <svg width="30" height="30" viewBox="0 0 30 30" fill="#e6e6e6">
                          <circle cx="15" cy="15" r="12.3" fill="none" stroke="#d8d8d8" strokeWidth="1.5" strokeDasharray="12.6 6.72" strokeDashoffset="-3.36" />
                          <rect x="10" y="10" width="10" height="10" />
                          <path d="M15 1.5l2.8 4.5h-5.6zM15 28.5l2.8-4.5h-5.6zM1.5 15L6 12.2v5.6zM28.5 15L24 12.2v5.6z" />
                        </svg>
                      </Tool>
                    </ToolGroup>
                    <ToolGroup>
                      <Tool more>
                        <svg width="32" height="30" viewBox="0 0 32 30" fill="none">
                          <path d="M2 23c4 5 8 2 12-1.5s10-8.5 16 1" stroke="#8ed1ac" strokeWidth="1.5" />
                          <path d="M1 22l2-6L16.5 3.5l4 4L6.5 20z" fill="#e6e6e6" /><path d="M17.5 3l2-1.8 3.5 3.3-1.8 2z" fill="#e6e6e6" />
                        </svg>
                      </Tool>
                      <Tool>
                        <svg width="30" height="32" viewBox="0 0 30 32" fill="none">
                          <path d="M11.5 12v14H25C25 18 19 12 11.5 12z" fill="#98dcb8" />
                          <path d="M12 11.5C20 11.5 26 18 26 26" stroke="#98dcb8" strokeWidth="1.4" />
                          <path d="M4.5 1H7v26h23v3.5H4.5z" fill="#e6e6e6" />
                          <path d="M9 2v24" stroke="#e0e0e0" strokeWidth="3" strokeDasharray="1.3 1.1" />
                          <path d="M9 27.3h21" stroke="#e0e0e0" strokeWidth="3" strokeDasharray="1.3 1.1" />
                        </svg>
                      </Tool>
                    </ToolGroup>
                    <ToolGroup>
                      <Tool more>
                        <svg width="34" height="32" viewBox="0 0 34 32" fill="none" stroke="#8ed1ac" strokeWidth="1.3">
                          <path d="M9.5 13.5h17.5v17H9.5zM9.5 13.5L15 8h17l-5 5.5M32 8v16.5l-5 6" />
                          <path d="M7 2v9M2.5 6.5h9" strokeWidth="2.4" stroke="#98dcb8" />
                        </svg>
                      </Tool>
                    </ToolGroup>
                  </ToolColumn>
                  <ViewInfo>
                    <span>User Perspective</span>
                    <span>(1) Scene Collection | Circle</span>
                  </ViewInfo>
                  <Spacer />
                  <NavColumn>
                    <NavGizmo />
                    <NavButtons>
                      <NavButton>
                        <svg width="22" height="22" viewBox="0 0 22 22"><circle cx="13" cy="9" r="8" fill="#e2e2e2" /><path d="M8 14l-6 6" stroke="#e2e2e2" strokeWidth="3.2" strokeLinecap="round" /><path d="M13 5v8M9 9h8" stroke="#2d2d2d" strokeWidth="1.5" /></svg>
                      </NavButton>
                      <NavButton>
                        <svg width="22" height="22" viewBox="0 0 22 22" fill="none" stroke="#e2e2e2" strokeWidth="2.4" strokeLinecap="round">
                          <path d="M7 11L5.5 4.5M10.2 10V2.5M13.5 10L14.5 3M16.5 11.5L18.5 6M6 15L2 10.5" /><path d="M6 10.5h11c0 5-2 9-6.5 9S5 15 4.5 13z" fill="#e2e2e2" />
                        </svg>
                      </NavButton>
                      <NavButton>
                        <svg width="22" height="22" viewBox="0 0 22 22" fill="#e2e2e2"><circle cx="5" cy="7" r="4" /><circle cx="14" cy="6" r="5.5" /><path d="M5 8h10v4H5zM4 13h12v7H4zM16 16l5-2.5v7L16 18zM1 14h3v3H1z" /><circle cx="5" cy="7.5" r="1.3" fill="#2d2d2d" /><circle cx="14" cy="6" r="1.8" fill="#2d2d2d" /></svg>
                      </NavButton>
                      <NavButton>
                        <svg width="22" height="22" viewBox="0 0 22 22" fill="none" stroke="#e2e2e2" strokeWidth="1.5"><path d="M5 3h12l4 15.5H1zM3.8 7.5h14.5M2.5 12.5h17M9 3L7.5 18.5M13 3l1.5 15.5" /></svg>
                      </NavButton>
                    </NavButtons>
                  </NavColumn>
                  <SidePanel>
                    <PanelHead bg="#404040"><Triangle open />Transform<Spacer /><Grip /></PanelHead>
                    <PanelBody>
                      <FieldLabel h={25.7}>Location:</FieldLabel>
                      <AxisFields w={175} values={["0 m", "0 m", "0 m"]} lock />
                      <FieldLabel>Rotation:</FieldLabel>
                      <AxisFields w={175} values={["-90°", "0°", "0°"]} lock mb={3} />
                      <Dropdown w={229}>XYZ Euler<Chevron /></Dropdown>
                      <FieldLabel>Scale:</FieldLabel>
                      <AxisFields w={175} values={["1.000", "1.000", "1.000"]} lock />
                      <FieldLabel>Dimensions:</FieldLabel>
                      <AxisFields w={229} values={["2 m", "2 m", "0.000498 m"]} />
                    </PanelBody>
                  </SidePanel>
                  <TabStrip>
                    <SideTab h={48} active>Item</SideTab>
                    <SideTab h={44}>Tool</SideTab>
                    <SideTab h={49}>View</SideTab>
                  </TabStrip>
                </OverlayRow>
              </Overlay>
              <Annotation>Apply Context Menu<br />Ctrl + A</Annotation>
              <PopupMenu>
                <MenuTitle>Apply</MenuTitle>
                <Separator />
                <Entry text="Location" k={0} />
                <Entry text="Rotation" k={0} active />
                <Entry text="Scale" k={0} />
                <Entry text="All Transforms" k={0} />
                <Entry text="Rotation & Scale" k={1} />
                <Separator />
                <Entry text="Location to Deltas" k={4} />
                <Entry text="Rotation to Deltas" k={12} />
                <Entry text="Scale to Deltas" k={1} />
                <Entry text="All Transforms to Deltas" k={7} />
                <Entry text="Animated Transforms to Deltas" k={2} />
                <Separator />
                <Entry text="Visual Transform" k={0} />
                <Entry text="Visual Geometry to Mesh" k={7} />
                <Entry text="Make Instances Real" k={0} />
              </PopupMenu>
              <Tooltip>Apply the object's transformation to its data.</Tooltip>
            </ViewBody>
          </Area>

          <Area h={98} bg="#323232">
            <Header bg="#383838">
              <Group ml={10} mt={5} edge="#424242">
                <Cell w={38}>
                  <Ic><circle cx="9" cy="9" r="8.5" fill="#e0e0e0" stroke="none" /><path d="M11.5 3L8.5 9.5l3.5 4.5" stroke="#2a2a2a" strokeWidth="2" /></Ic>
                  <Chevron />
                </Cell>
              </Group>
              <Group ml={9} mt={5} edge="#424242">
                <Cell w={86}><Caption ml={2} mr={4}>Playback</Caption><Chevron /></Cell>
                <Cell w={75} divider><Caption ml={1} mr={5}>Keying</Caption><Chevron /></Cell>
              </Group>
              <MenuItem w={50} ml={11}>View</MenuItem>
              <MenuItem w={60}>Marker</MenuItem>
              <Group ml={602}>
                <Cell w={23} tone="mid"><Ic><circle cx="9" cy="9" r="4.8" fill="#e0e0e0" stroke="none" /></Ic></Cell>
                <Cell w={25}><Chevron c="#555" /></Cell>
              </Group>
              <Group ml={7}>
                {[
                  "M3.5 3.5h1.6v11H3.5zM13.5 3.5v11L5.8 9z",
                  "M5.5 3.5L10.5 9l-5 5.5L.5 9zM17.5 4v10L11 9z",
                  "M14 2.5v13L3 9z",
                  "M4 2.5v13L15 9z",
                  "M12.5 3.5L17.5 9l-5 5.5L7.5 9zM.5 4v10L7 9z",
                  "M14.5 3.5h-1.6v11h1.6zM4.5 3.5v11L12.2 9z",
                ].map((d, i) => (
                  <Cell key={i} w={24.6} tone="mid" divider={i > 0}><Ic><path d={d} fill="#e8e8e8" stroke="none" /></Ic></Cell>
                ))}
              </Group>
              <Group ml={620}><Cell w={90} tone="mid"><Caption>1</Caption></Cell></Group>
              <Group ml={9}>
                <Cell w={23} tone="mid"><Ic><circle cx="9" cy="10.5" r="6.3" /><path d="M9 6.5V11h3M7 1.2h4M9 1.2v3M14 4.5l2-2" /></Ic></Cell>
                <Cell w={112} tone="mid" divider align="space-between" pad={18}><Caption>Start</Caption><Caption>1</Caption></Cell>
                <Cell w={106} tone="mid" divider align="space-between" pad={18}><Caption>End</Caption><Caption>250</Caption></Cell>
              </Group>
            </Header>
            <Ruler>
              {Array.from({ length: 25 }, (_, i) => (
                <RulerMark key={i}>{(i + 1) * 10}</RulerMark>
              ))}
            </Ruler>
            <Track>
              <TrackLines width="2113" height="38" viewBox="0 0 2113 38">
                <rect x={fx(1)} y="0" width={fx(250) - fx(1)} height="38" fill="#424242" />
                {Array.from({ length: 52 }, (_, i) => (
                  <line key={i} x1={fx(i * 5)} x2={fx(i * 5)} y1="0" y2="38" stroke={i === 50 ? "#000" : i % 2 ? "#393939" : "#2a2a2a"} strokeWidth="1.2" />
                ))}
                <line x1={fx(1)} x2={fx(1)} y1="0" y2="38" stroke="#5680c2" strokeWidth="2" />
              </TrackLines>
              <ScrollBar><Knob /><Knob /></ScrollBar>
            </Track>
            <Playhead>1</Playhead>
            <EdgeHandle><svg width="6" height="10" viewBox="0 0 6 10" fill="none" stroke="#999" strokeWidth="1.3"><path d="M1 .5L5 5 1 9.5" /></svg></EdgeHandle>
            <EdgeHandle right><svg width="6" height="10" viewBox="0 0 6 10" fill="none" stroke="#999" strokeWidth="1.3"><path d="M5 .5L1 5l4 4.5" /></svg></EdgeHandle>
          </Area>
        </LeftColumn>

        <RightColumn>
          <Area h={416} bg="#282828">
            <Header bg="#383838">
              <Group ml={10} mt={4}>
                <Cell w={39}>
                  <Ic><path d="M3 3v12h6M3 8.5h6" strokeWidth="1.1" /><rect x="0" y="1" width="7" height="3.5" fill="#dcdcdc" stroke="none" /><rect x="9" y="6.5" width="8.5" height="4.5" fill="#dcdcdc" stroke="none" /><rect x="9" y="12.5" width="8.5" height="4.5" fill="#dcdcdc" stroke="none" /></Ic>
                  <Chevron />
                </Cell>
              </Group>
              <Group ml={7} mt={4}><Cell w={39}><LayersIcon /><Chevron /></Cell></Group>
              <Group ml={40} mt={4} edge="#424242"><Cell w={142} tone="field" align="flex-start" pad={5}><SearchIcon /></Cell></Group>
              <Group ml={84} mt={4}>
                <Cell w={39}><Ic><path d="M1.5 1.5h15L11 8.5v6.5l-4 2V8.5z" /></Ic><Chevron /></Cell>
              </Group>
              <Group ml={8} mt={4}>
                <Cell w={23} tone="mid"><Ic c="#bcbcbc"><path d="M9 4H1v3.5h9M2 7.5v9.5h12V10M6 11.5h4" /><circle cx="13.5" cy="4.5" r="4.5" fill="#e0e0e0" stroke="none" /><path d="M13.5 1.8v5.4M10.8 4.5h5.4" stroke="#444" /></Ic></Cell>
              </Group>
            </Header>
            <Tree>
              <TreeRow h={26} pl={25} pt={1}>
                <IconPlate bg="#4a4a4a" w={25} mr={4}><Ic s={17}><rect x="1" y="1" width="16" height="4.5" fill="#e6e6e6" stroke="none" /><path d="M1.8 6.8h14.4V17H1.8z" fill="#e6e6e6" stroke="none" /><path d="M6.5 10.5h5" stroke="#4a4a4a" strokeWidth="2" /></Ic></IconPlate>
                <TreeName c="#c0c0c0">Scene Collection</TreeName>
              </TreeRow>
              <TreeRow h={25} pl={34} selected>
                <Triangle />
                <IconPlate bg="#5f769f" ml={8} mr={5}><Ic><path d="M1.5 1.5h15L11 17H7z" fill="#e09a62" stroke="none" /><path d="M6.2 4.5h5.6L9 12.5z" fill="#5f769f" stroke="none" /></Ic></IconPlate>
                <TreeName c="#f5a52c" w={64}>Circle</TreeName>
                <MeshIcon c="#10b99a" />
                <RowTools>
                  <Ic s={17}><path d="M.5 9C5 1.5 13 1.5 17.5 9 13 16.5 5 16.5.5 9z" fill="#e6e6e6" stroke="none" /><circle cx="9" cy="9" r="3.6" stroke="#3b5689" strokeWidth="1.8" /></Ic>
                  <Ic s={17}><path d="M0 4h5l1.5-2.5h5L13 4h5v12.5H0z" fill="#e6e6e6" stroke="none" /><circle cx="9" cy="9.7" r="4.2" stroke="#3b5689" strokeWidth="1.6" /></Ic>
                </RowTools>
              </TreeRow>
              <TreeRow h={25} pl={0} />
            </Tree>
          </Area>

          <Area h={882} bg="#424242">
            <Header bg="#383838">
              <Group ml={10} mt={4}>
                <Cell w={39}>
                  <Ic><rect x=".8" y="1.3" width="16.4" height="6" rx="3" /><rect x=".8" y="10.7" width="16.4" height="6" rx="3" /><path d="M3.5 1h5v6.5h-5q-3-1-3-3.2t3-3.3z" fill="#dcdcdc" stroke="none" /><path d="M3.5 10.5h8.5V17H3.5q-3-1-3-3.2t3-3.3z" fill="#dcdcdc" stroke="none" /></Ic>
                  <Chevron />
                </Cell>
              </Group>
              <Group ml={103} mt={4} edge="#424242"><Cell w={141} tone="field" align="flex-start" pad={5}><SearchIcon /></Cell></Group>
              <Group ml={115} mt={4}><Cell w={24}><Chevron /></Cell></Group>
            </Header>
            <PropBody>
              <PropTabs>
                <PropTab><Ic><path d="M3.7 0v8" /><path d="M2 9h3.4l1.4 4c.5 2.5-1 4.5-3.1 4.5S0 15.5.6 13z" fill="#dcdcdc" stroke="none" /><path d="M11.5 0v4l2 1.5 2-1.5V0c2.5 1.5 3 5.5.5 7.5V15a2 2.2 0 0 1-4.500 0V7.500C8.500 5.500 9 1.500 11.500 0z" fill="#dcdcdc" stroke="none" /></Ic></PropTab>
                <PropTab gapTop><Ic c="#c8c8c8"><path d="M0 4.5h2.5L4 1h6.5L12 4.5h6V17H0z" fill="#c8c8c8" stroke="none" /><path d="M2 7h10v8H2z" fill="#444" stroke="none" /><path d="M2 9.5h10M2 12h10" stroke="#777" strokeWidth="1" /><path d="M14.5 7.5h2M14.5 11h2M14.5 14.5h2" stroke="#333" strokeWidth="2" /></Ic></PropTab>
                <PropTab><Ic><path d="M0 1.5Q0 .5 1 .5h16q1 0 1 1V10h-3V6H3v4H0z" fill="#c8c8c8" stroke="none" /><path d="M4 7h10v10.5H4z" fill="#b0b0b0" stroke="none" /><path d="M5.5 15.5l3.3-5 3.5 5z" fill="#2b2b2b" stroke="none" /></Ic></PropTab>
                <PropTab><LayersIcon c="#c8c8c8" /></PropTab>
                <PropTab><SceneIcon c="#c8c8c8" /></PropTab>
                <PropTab><Ic c="#c8626c"><circle cx="9" cy="9" r="7.9" /><path d="M2.500 5Q5 1.500 9.500 1.800L10.500 4 8.500 5.500 10 7 7.500 8.200 5.500 7.500 4.500 9 1.800 8.500zM7 9.500l3.500-.5 2.500 2.500-1.500 1.500-1 3.500-2.500-.5.5-3z" fill="#c8626c" stroke="none" /><path d="M15.5 2.5l2-2M2.5 15.5l-2 2" /></Ic></PropTab>
                <PropTab gapTop active><ObjectIcon c="#eb9c58" b="#b07843" /></PropTab>
                <PropTab><Wrench /></PropTab>
                <PropTab><Ic c="#4f72a8"><path d="M3.5 3.5V15M3.5 3.5H15M3.5 3.5L15 15" /><circle cx="3.3" cy="3.3" r="3.1" fill="#6b9be0" stroke="none" /><circle cx="15.3" cy="3.3" r="1.9" fill="#5b83bf" stroke="none" /><circle cx="3.3" cy="15.3" r="2" fill="#5b83bf" stroke="none" /><circle cx="15.3" cy="15.3" r="2.4" fill="#6b9be0" stroke="none" /></Ic></PropTab>
                <PropTab><Ic c="#5b83bf"><path d="M12.5 1.7a8 8 0 1 0 3.8 10.8" /><circle cx="9" cy="9" r="3.6" fill="#6b9be0" stroke="none" /><circle cx="15.5" cy="2.6" r="2.2" fill="#5b83bf" stroke="none" /></Ic></PropTab>
                <PropTab><Ic c="#6b9be0"><circle cx="7" cy="11" r="3.3" strokeWidth="2.4" /><path d="M2.5 6.5L13 .8q4 0 4 4L13 14.5q-3.5 4-9 2T.8 10q.2-2 1.7-3.5z" /><circle cx="14" cy="4" r="1" fill="#6b9be0" stroke="none" /></Ic></PropTab>
                <PropTab><MeshIcon /></PropTab>
                <PropTab><MaterialIcon /></PropTab>
                <PropTab gapTop>
                  <Ic c="#c8626c">
                    <rect x=".7" y=".7" width="16.6" height="16.6" />
                    {[0, 1, 2, 3].map((r) => [0, 1, 2, 3].map((k) => (r + k) % 2 === 0 && (
                      <rect key={`${r}${k}`} x={1 + k * 4} y={1 + r * 4} width="4" height="4" fill="#c8626c" stroke="none" />
                    )))}
                  </Ic>
                </PropTab>
              </PropTabs>
              <PropContent>
                <Crumb>
                  <ObjectIcon /><Caption>Circle</Caption><Spacer />
                  <Ic c="#9a9a9a"><path d="M11.5 1l5.5 5.5-2 .5-3.5 3.5.5 3.5-8-8 3.5.5L11 3zM6.5 11.5L1 17" /></Ic>
                </Crumb>
                <IdBlock>
                  <Group mt={0} edge="#484848">
                    <Cell w={38}><ObjectIcon /><Chevron /></Cell>
                    <Cell w={348} tone="field" align="flex-start" pad={9}><Caption>Circle</Caption></Cell>
                  </Group>
                </IdBlock>
                <PanelHead><Triangle open />Transform<Spacer /><Grip /></PanelHead>
                <TransformBody>
                  <AxisBlock label="Location" values={["0 m", "0 m", "0 m"]} />
                  <AxisBlock label="Rotation" values={["-90°", "0°", "0°"]} />
                  <ModeRow>
                    <RowLabel>Mode</RowLabel>
                    <Dropdown w={186}>XYZ Euler<Chevron /></Dropdown>
                    <Dot ml={22} />
                  </ModeRow>
                  <AxisBlock label="Scale" values={["1.000", "1.000", "1.000"]} />
                  <PanelHead h={36} pl={28} small><Triangle />Delta Transform</PanelHead>
                </TransformBody>
                {["Relations", "Collections", "Instancing", "Motion Paths", "Visibility", "Viewport Display", "Line Art", "Custom Properties"].map((t) => (
                  <PanelHead key={t}><Triangle />{t}<Spacer /><Grip /></PanelHead>
                ))}
              </PropContent>
            </PropBody>
          </Area>
        </RightColumn>
      </Main>

      <StatusBar>
        <StatusItem w={81}><Mouse b="l" />Select</StatusItem>
        <StatusItem w={231} gap={10}><Mouse b="d" />Box Select</StatusItem>
        <StatusItem w={311}><Mouse b="m" />Rotate View</StatusItem>
        <StatusItem w={400}><Mouse b="r" />Object Context Menu</StatusItem>
        <Spacer />
        <StatusItem w={50}>2.93.4</StatusItem>
      </StatusBar>
    </Window>
  );
}
